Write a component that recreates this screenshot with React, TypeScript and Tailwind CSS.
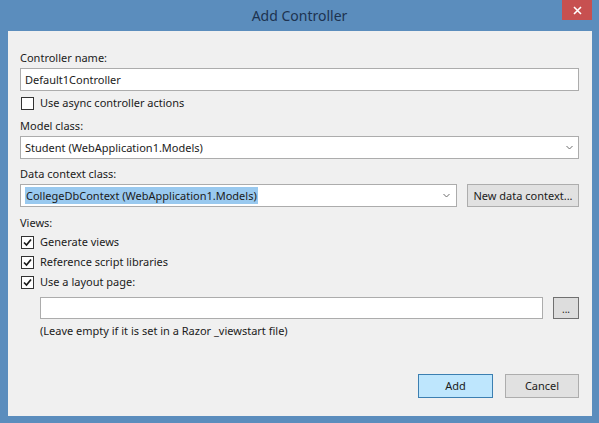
import React from "react";

const font = { fontFamily: '"Noto Sans", "Liberation Sans", sans-serif' };

function Chevron() {
  return (
    <svg width="7" height="5" viewBox="0 0 7 5" className="shrink-0">
      <polyline points="0.5,1 3.5,4 6.5,1" fill="none" stroke="#6d6d6d" strokeWidth="1" />
    </svg>
  );
}

function CheckRow({ label, checked, className = "" }: { label: string; checked?: boolean; className?: string }) {
  return (
    <div className={`flex items-center ${className}`}>
      <span className="ml-[1px] flex h-[13px] w-[13px] items-center justify-center border border-[#333333] bg-white">
        {checked && (
          <svg width="11" height="11" viewBox="0 0 11 11">
            <polyline points="2,5.5 4.5,8 9,2.5" fill="none" stroke="#1a1a1a" strokeWidth="1.7" />
          </svg>
        )}
      </span>
      <span className="ml-[6px]">{label}</span>
    </div>
  );
}

export default function App() {
  return (
    <div
      className="flex h-[423px] w-[599px] flex-col bg-[#5b8dbd] text-[11px] leading-[16px] text-[#1b1b1b]"
      style={font}
    >
      {/* title bar */}
      <div className="relative flex h-[31px] items-center justify-center">
        <span className="text-[14px] text-[#1d3350]">Add Controller</span>
        <div className="absolute right-[7px] top-0 flex h-[20px] w-[30px] items-center justify-center bg-[#c75050]">
          <svg width="9" height="9" viewBox="0 0 9 9">
            <path d="M1 1 L8 8 M8 1 L1 8" stroke="#ffffff" strokeWidth="1.6" />
          </svg>
        </div>
      </div>

      <div className="mx-[8px] mb-[7px] mr-[7px] flex flex-1 flex-col bg-[#f0f0f0] pl-[12px] pr-[13px] pt-[19px] pb-[18px]">
        <div className="h-[16px]">Controller name:</div>
        <div className="mt-[2px] flex h-[23px] items-center border border-[#acacac] bg-white pl-[4px]">
          Default1Controller
        </div>
        <CheckRow className="mt-[4px] h-[16px]" label="Use async controller actions" />

        <div className="mt-[7px] h-[16px]">Model class:</div>
        <div className="mt-[2px] flex h-[23px] items-center justify-between border border-[#acacac] bg-white pl-[4px] pr-[5px]">
          <span>Student (WebApplication1.Models)</span>
          <Chevron />
        </div>

        <div className="mt-[7px] h-[16px]">Data context class:</div>
        <div className="mt-[2px] flex h-[23px] gap-[10px]">
          <div className="flex flex-1 items-center justify-between border border-[#acacac] bg-white pl-[4px] pr-[6px]">
            <span className="bg-[#99c9ef] px-[1px] leading-[17px]">CollegeDbContext (WebApplication1.Models)</span>
            <Chevron />
          </div>
          <div className="flex w-[112px] items-center justify-center border border-[#adadad] bg-[#e1e1e1]">
            New data context...
          </div>
        </div>

        <div className="mt-[8px] h-[16px]">Views:</div>
        <CheckRow className="mt-[1px] h-[20px]" label="Generate views" checked />
        <CheckRow className="h-[20px]" label="Reference script libraries" checked />
        <CheckRow className="h-[20px]" label="Use a layout page:" checked />

        <div className="ml-[20px] mt-[5px] flex h-[22px] gap-[10px]">
          <div className="flex-1 border border-[#acacac] bg-white" />
          <div className="flex w-[26px] items-end justify-center border border-[#707070] bg-[#dddddd] pb-[4px] text-[10px] leading-[10px]">
            ...
          </div>
        </div>
        <div className="ml-[20px] mt-[4px] h-[16px]">(Leave empty if it is set in a Razor _viewstart file)</div>

        <div className="mt-auto flex justify-end gap-[12px]">
          <div className="flex h-[24px] w-[75px] items-center justify-center border border-[#3c7fb1] bg-[#bee6fd]">
            Add
          </div>
          <div className="flex h-[24px] w-[74px] items-center justify-center border border-[#adadad] bg-[#e1e1e1]">
            Cancel
          </div>
        </div>
      </div>
    </div>
  );
}
